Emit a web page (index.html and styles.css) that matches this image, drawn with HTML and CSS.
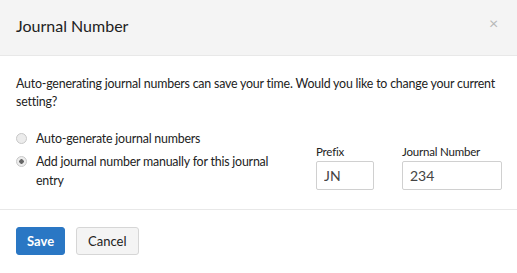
FILE: index.html
```html
<!DOCTYPE html>
<html lang="en">
<head>
  <meta charset="UTF-8">
  <title>Journal Number</title>
  <link rel="stylesheet" href="styles.css">
</head>
<body>
  <div class="modal">
    <div class="modal-header">
      <h1>Journal Number</h1>
      <span class="close">&times;</span>
    </div>
    <div class="modal-body">
      <p class="intro">Auto-generating journal numbers can save your time. Would you like to change your current setting?</p>
      <div class="options">
        <div class="choices">
          <label class="choice"><span class="radio"></span><span>Auto-generate journal numbers</span></label>
          <label class="choice"><span class="radio checked"></span><span>Add journal number manually for this journal entry</span></label>
        </div>
        <div class="fields">
          <div class="field prefix">
            <span class="field-label">Prefix</span>
            <input type="text" value="JN">
          </div>
          <div class="field number">
            <span class="field-label">Journal Number</span>
            <input type="text" value="234">
          </div>
        </div>
      </div>
    </div>
    <div class="modal-footer">
      <button class="btn btn-primary">Save</button>
      <button class="btn">Cancel</button>
    </div>
  </div>
</body>
</html>
```

FILE: styles.css
```css
body {
  margin: 0;
  font-family: Lato, "Noto Sans", sans-serif;
  font-size: 12.4px;
  letter-spacing: -0.2px;
  color: #222;
  background: #fff;
}
.modal {
  width: 517px;
  height: 273px;
}
.modal-header {
  height: 55px;
  background: #f4f4f4;
  border-bottom: 1px solid #e8e8e8;
  display: flex;
  align-items: center;
  justify-content: space-between;
  padding: 0 16px;
}
h1 {
  font-size: 16px;
  font-weight: normal;
  letter-spacing: 0;
  margin: 0 0 4px;
  color: #222;
}
.close {
  color: #b8b8b8;
  font-size: 16px;
  margin: 0 3px 10px 0;
}
.modal-body {
  padding: 19px 16px 19px;
  border-bottom: 1px solid #e8e8e8;
}
.intro {
  margin: 0 0 18px;
  line-height: 18px;
}
.options {
  display: flex;
  justify-content: space-between;
  align-items: flex-end;
}
.choices {
  width: 264px;
  display: flex;
  flex-direction: column;
  gap: 4px;
}
.choice {
  display: flex;
  align-items: flex-start;
  gap: 9px;
  line-height: 19px;
}
.radio {
  flex: none;
  width: 9px;
  height: 9px;
  margin: 4px 0 0 0;
  border: 1px solid #c8c8c8;
  border-radius: 50%;
  background: #ececec;
  box-sizing: content-box;
}
.radio.checked {
  background: radial-gradient(circle, #666 0 2px, #ececec 2.5px);
}
.fields {
  display: flex;
  gap: 28px;
  margin-right: -1px;
}
.field {
  display: flex;
  flex-direction: column;
}
.field-label {
  font-size: 11.5px;
  line-height: 15px;
  margin-bottom: 2px;
}
.field input {
  height: 29px;
  box-sizing: border-box;
  border: 1px solid #d0d0d0;
  border-radius: 2px;
  padding: 0 7px;
  font-family: inherit;
  font-size: 14px;
  color: #444;
}
.prefix input {
  width: 58px;
}
.number input {
  width: 100px;
}
.modal-footer {
  padding: 17px 16px;
  display: flex;
  gap: 11px;
}
.btn {
  height: 28px;
  padding: 0 11px;
  font-family: inherit;
  font-size: 13px;
  letter-spacing: 0;
  border: 1px solid #d6d6d6;
  border-radius: 3px;
  background: #f4f4f4;
  color: #222;
}
.btn-primary {
  background: #2a77c4;
  border-color: #2a77c4;
  color: #fff;
  font-weight: bold;
  padding: 0 10px;
}
```
